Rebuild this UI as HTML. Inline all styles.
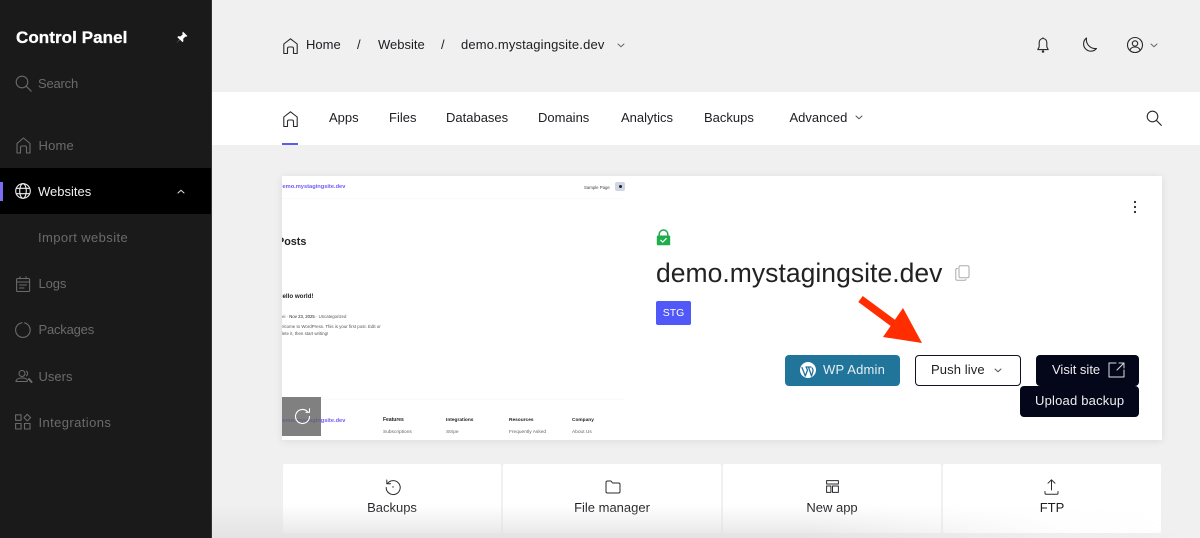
<!DOCTYPE html>
<html><head><meta charset="utf-8"><style>
html,body{margin:0;padding:0;width:1200px;height:538px;overflow:hidden;background:#f0f0f0;font-family:"Liberation Sans","DejaVu Sans",sans-serif;color:#1d1d22}
.t{position:absolute;white-space:nowrap;font-size:13px;line-height:18px}
.b{position:absolute}
.c{text-align:center}
svg{position:absolute;overflow:visible;fill:none;stroke-linecap:round;stroke-linejoin:round}
.g{color:#6b6b6b}
.sv{stroke:#6a6a6a;stroke-width:1.1}
.dk{stroke:#2a2a2e;stroke-width:1.1}
.m{position:absolute;white-space:nowrap;color:#333}
</style></head><body>
<div class="b" style="left:212px;top:92px;width:988px;height:53px;background:#fff"></div>
<div class="b" style="left:0;top:0;width:211px;height:538px;background:#1a1a1a"></div>
<div class="b" style="left:211px;top:0;width:1px;height:538px;background:#333"></div>
<div class="b" style="left:0;top:168px;width:211px;height:46px;background:#000"></div>
<div class="b" style="left:0;top:182px;width:3px;height:19px;background:#7b6cf6"></div>

<div class="t" style="left:16px;top:28px;font-size:17px;font-weight:bold;color:#fff;line-height:20px;letter-spacing:.07px;-webkit-text-stroke:.3px #fff">Control Panel</div>
<svg style="left:175px;top:31px" width="13" height="13" viewBox="0 0 13 13"><path d="M8 .6l4.400 4.400-1 .8-1-.2-2.200 2.200.2 2.400-.9.900-2.500-2.500L1 12.400l3.700-3.900-2.400-2.400.9-.9 2.400.2L7.800 3.200l-.6-1z" fill="#fff"/></svg>
<svg class="sv" style="left:15px;top:75px" width="17" height="17" viewBox="0 0 17 17"><circle cx="7" cy="7" r="5.800"/><path d="M11.200 11.200l5 5"/></svg>
<div class="t g" style="left:38px;top:75px;letter-spacing:-.2px">Search</div>
<svg class="sv" style="left:16px;top:137px" width="15" height="17" viewBox="0 0 15 17"><path d="M1 16V6.500L7.500 1 14 6.500V16h-3.500v-5.500a1.500 1.500 0 0 0-1.500-1.500H6a1.500 1.500 0 0 0-1.500 1.500V16z"/></svg>
<div class="t g" style="left:38.500px;top:137px;letter-spacing:.2px">Home</div>
<svg style="left:15px;top:183px;stroke:#f0f0f0;stroke-width:1.100" width="16" height="16" viewBox="0 0 16 16"><circle cx="8" cy="8" r="7.300"/><ellipse cx="8" cy="8" rx="3.300" ry="7.300"/><path d="M1.300 5.300h13.400M1.300 10.700h13.400"/></svg>
<div class="t" style="left:38px;top:183px;color:#f0f0f0">Websites</div>
<svg style="left:177px;top:189px;stroke:#ddd;stroke-width:1" width="8" height="5" viewBox="0 0 8 5"><path d="M1 4l3-2.800L7 4"/></svg>
<div class="t g" style="left:38px;top:229px;letter-spacing:.4px">Import website</div>
<svg class="sv" style="left:16px;top:276px" width="14" height="16" viewBox="0 0 14 16"><rect x=".6" y="2.500" width="13" height="13" rx="1"/><path d="M.6 6h13M4 .8v2M10 .8v2M3.500 9h7M3.500 12h4.500"/></svg>
<div class="t g" style="left:38.500px;top:275px;letter-spacing:-.1px">Logs</div>
<svg class="sv" style="left:15px;top:322px" width="16" height="16" viewBox="0 0 16 16"><path d="M7 .8A7.300 7.300 0 1 0 15.200 8 7.300 7.300 0 0 0 9.500.9"/></svg>
<div class="t g" style="left:38.500px;top:321px;letter-spacing:-.2px">Packages</div>
<svg class="sv" style="left:15px;top:370px" width="17" height="13" viewBox="0 0 17 13"><circle cx="7" cy="3.500" r="3"/><path d="M1 11.500c0-2.500 3-3.500 6-3.500s5 .8 5.500 2.500c0 .8-.5 1-1 1H2c-.6 0-1 0-1-.5zM11.500 1.200c1.500 1 1.500 3.600 0 4.600"/><path d="M14 9l2.500 3" stroke-width="2"/></svg>
<div class="t g" style="left:38.500px;top:368px">Users</div>
<svg class="sv" style="left:15px;top:414px" width="16" height="16" viewBox="0 0 16 16"><rect x=".6" y=".8" width="5.500" height="5.500"/><rect x=".6" y="9.500" width="5.500" height="5.500"/><rect x="9.500" y="9.500" width="5.500" height="5.500"/><path d="M12.300.3l3.300 3.300-3.300 3.300L9 3.600z"/></svg>
<div class="t g" style="left:38.500px;top:414px;letter-spacing:.4px">Integrations</div>

<svg class="dk" style="left:283px;top:38px" width="15" height="16" viewBox="0 0 15 16"><path d="M.8 15.500V6L7.500.8 14.200 6v9.500h-3.700v-5a1.500 1.500 0 0 0-1.500-1.500H6a1.500 1.500 0 0 0-1.500 1.500v5z"/></svg>
<div class="t" style="left:306px;top:36px">Home</div>
<div class="t" style="left:357px;top:36px">/</div>
<div class="t" style="left:378px;top:36px">Website</div>
<div class="t" style="left:441px;top:36px">/</div>
<div class="t" style="left:461px;top:36px;letter-spacing:.15px">demo.mystagingsite.dev</div>
<svg style="left:617px;top:43px;stroke:#666;stroke-width:1" width="8" height="5" viewBox="0 0 8 5"><path d="M1 1l3 2.800L7 1"/></svg>
<svg class="dk" style="left:1037px;top:37px" width="12" height="16" viewBox="0 0 12 16"><path d="M6 1.500a3.800 3.800 0 0 0-3.800 3.800v4.500L.8 12.600h10.400L9.800 9.800V5.300A3.800 3.800 0 0 0 6 1.500zM6 .8v.7"/><circle cx="6" cy="14.500" r=".7" fill="#2a2a2e"/></svg>
<svg class="dk" style="left:1081px;top:37px" width="16" height="16" viewBox="0 0 16 16"><path d="M5.500 1A7.300 7.300 0 1 0 15.500 11.500 9 9 0 0 1 5.500 1z"/></svg>
<svg class="dk" style="left:1127px;top:37px" width="16" height="16" viewBox="0 0 16 16"><circle cx="8" cy="8" r="7.500"/><circle cx="8" cy="6.500" r="2.700"/><path d="M3 13c.8-2.200 2.700-3 5-3s4.200.8 5 3"/></svg>
<svg style="left:1150px;top:43px;stroke:#666;stroke-width:1" width="8" height="5" viewBox="0 0 8 5"><path d="M1 1l3 2.800L7 1"/></svg>

<svg class="dk" style="left:283px;top:111px" width="15" height="16" viewBox="0 0 15 16"><path d="M.8 15.500V6L7.500.8 14.200 6v9.500h-3.700v-5a1.500 1.500 0 0 0-1.500-1.500H6a1.500 1.500 0 0 0-1.500 1.500v5z"/></svg>
<div class="b" style="left:282px;top:143px;width:16px;height:2px;background:#5b5bf0"></div>
<div class="t" style="left:329px;top:109px">Apps</div>
<div class="t" style="left:389px;top:109px">Files</div>
<div class="t" style="left:446px;top:109px">Databases</div>
<div class="t" style="left:538px;top:109px">Domains</div>
<div class="t" style="left:621px;top:109px">Analytics</div>
<div class="t" style="left:704px;top:109px">Backups</div>
<div class="t" style="left:789.500px;top:109px">Advanced</div>
<svg style="left:855px;top:115px;stroke:#555;stroke-width:1" width="8" height="5" viewBox="0 0 8 5"><path d="M1 1l3 2.800L7 1"/></svg>
<svg class="dk" style="left:1146px;top:110px" width="16" height="16" viewBox="0 0 16 16"><circle cx="6.500" cy="6.500" r="5.300"/><path d="M10.300 10.300l5 5"/></svg>

<div class="b" style="left:282px;top:176px;width:880px;height:264px;background:#fff;box-shadow:0 1px 8px rgba(0,0,0,.09);overflow:hidden">
  <div class="b" style="left:0;top:0;width:343px;height:264px;overflow:hidden;filter:blur(.35px)">
    <div class="m" style="left:-3px;top:6.500px;font-size:5.700px;line-height:9px;font-weight:bold;color:#6f5cf5">demo.mystagingsite.dev</div>
    <div class="m" style="left:302px;top:7.500px;font-size:4.300px;line-height:7px;color:#444">Sample Page</div>
    <div class="b" style="left:333px;top:6px;width:10px;height:9px;border-radius:2px;background:#cfd6e6"></div>
    <div class="b" style="left:337px;top:9px;width:3px;height:3px;border-radius:50%;background:#222"></div>
    <div class="b" style="left:0;top:22px;width:343px;height:1px;background:#fafafa"></div>
    <div class="m" style="left:-5px;top:60px;font-size:10.800px;line-height:13px;font-weight:bold;color:#222">Posts</div>
    <div class="m" style="left:-4px;top:116px;font-size:6.200px;line-height:9px;font-weight:bold;color:#222">Hello world!</div>
    <div class="m" style="left:-9px;top:136.500px;font-size:4.300px;line-height:7px;color:#555">Andrei · <span style="color:#222">Nov 23, 2025</span> · Uncategorized</div>
    <div class="m" style="left:-5px;top:147px;font-size:4.400px;line-height:7px;color:#555">Welcome to WordPress. This is your first post. Edit or</div>
    <div class="m" style="left:-5px;top:154px;font-size:4.400px;line-height:7px;color:#555">delete it, then start writing!</div>
    <div class="b" style="left:0;top:223px;width:343px;height:1px;background:#fafafa"></div>
    <div class="m" style="left:-3px;top:240.500px;font-size:5.700px;line-height:9px;font-weight:bold;color:#6f5cf5">demo.mystagingsite.dev</div>
    <div class="m" style="left:101px;top:241px;font-size:5px;line-height:7px;font-weight:bold;color:#222">Features</div>
    <div class="m" style="left:164px;top:241px;font-size:4.800px;line-height:7px;font-weight:bold;color:#222">Integrations</div>
    <div class="m" style="left:227px;top:241px;font-size:4.800px;line-height:7px;font-weight:bold;color:#222">Resources</div>
    <div class="m" style="left:290px;top:241px;font-size:4.800px;line-height:7px;font-weight:bold;color:#222">Company</div>
    <div class="m" style="left:101px;top:253px;font-size:4.800px;line-height:7px;color:#666">Subscriptions</div>
    <div class="m" style="left:164px;top:253px;font-size:4.800px;line-height:7px;color:#666">Stripe</div>
    <div class="m" style="left:227px;top:253px;font-size:4.800px;line-height:7px;color:#666">Frequently Asked</div>
    <div class="m" style="left:290px;top:253px;font-size:4.800px;line-height:7px;color:#666">About Us</div>
  </div>
  <div class="b" style="left:0;top:221px;width:39px;height:39px;background:rgba(100,100,100,.82)"></div>
  <svg style="left:12px;top:232px;stroke:#fff;stroke-width:1.100" width="17" height="17" viewBox="0 0 17 17"><path d="M15.500 8.500a7 7 0 1 1-2.200-5.100M15.500 .8v3.500H12"/></svg>
</div>

<svg style="left:1131px;top:200px" width="8" height="14" viewBox="0 0 8 14"><circle cx="4" cy="2" r="1.100" fill="#222"/><circle cx="4" cy="7" r="1.100" fill="#222"/><circle cx="4" cy="12" r="1.100" fill="#222"/></svg>
<svg style="left:656px;top:229px" width="15" height="17" viewBox="0 0 15 17"><path d="M3.200 7V5.300a4.300 4.300 0 0 1 8.600 0V7" stroke="#22a84a" stroke-width="1.500"/><rect x=".8" y="6.500" width="13.400" height="9.700" rx="1" fill="#1fae4b"/><path d="M4.800 11.300l2 1.800 3.400-3.500" stroke="#fff" stroke-width="1.200"/></svg>
<div class="t" style="left:656px;top:256px;font-size:26.500px;line-height:34px;color:#222;letter-spacing:.03px">demo.mystagingsite.dev</div>
<svg style="left:955px;top:265px;stroke:#aaa;stroke-width:1" width="15" height="16" viewBox="0 0 15 16"><rect x="4" y=".8" width="10" height="12" rx="1.500"/><path d="M2.500 3.500H2A1.200 1.200 0 0 0 .8 4.700v9.300A1.200 1.200 0 0 0 2 15.200h8a1.200 1.200 0 0 0 1-1"/></svg>
<div class="b c" style="left:656px;top:301px;width:35px;height:24px;border-radius:2px;background:#5058f8;color:#fff;font-size:10.500px;line-height:24px">STG</div>

<svg style="left:0;top:0" width="1200" height="538" viewBox="0 0 1200 538"><path d="M860.500 299L893 323" stroke="#ff2d00" stroke-width="7.500" stroke-linecap="butt"/><path d="M903 308L922 343 883 337z" fill="#ff2d00"/></svg>

<div class="b" style="left:785px;top:355px;width:115px;height:31px;border-radius:4px;background:#21759b"></div>
<svg style="left:800px;top:362px" width="16" height="16" viewBox="0 0 16 16"><circle cx="8" cy="8" r="8" fill="#fff"/><path d="M2 5.500l3.300 8.500L7.500 8l-1.500-3M6 5h5M8.500 5l3 9 1.500-5c.3-1.300-.3-2-.8-3" stroke="#21759b" stroke-width="1.300"/></svg>
<div class="t" style="left:823px;top:361px;color:#e8eff3;letter-spacing:.2px">WP Admin</div>
<div class="b" style="left:915px;top:355px;width:104px;height:29px;border:1px solid #10121f;border-radius:4px;background:#fff"></div>
<div class="t" style="left:931px;top:361px;letter-spacing:.1px">Push live</div>
<svg style="left:994px;top:368px;stroke:#555;stroke-width:1" width="8" height="5" viewBox="0 0 8 5"><path d="M1 1l3 2.800L7 1"/></svg>
<div class="b" style="left:1036px;top:355px;width:103px;height:31px;border-radius:4px;background:#04071a"></div>
<div class="t" style="left:1052px;top:361px;color:#eee">Visit site</div>
<svg style="left:1108px;top:362px;stroke:#ddd;stroke-width:1" width="17" height="16" viewBox="0 0 17 16"><path d="M8 1H1v14h15V8M9 8l7-7M11 1h5v5"/></svg>
<div class="b" style="left:1020px;top:386px;width:119px;height:31px;border-radius:4px;background:#04071a"></div>
<div class="t" style="left:1035px;top:392px;color:#eee;letter-spacing:.2px">Upload backup</div>

<div class="b" style="left:283px;top:464px;width:218px;height:69px;background:#fff;border-radius:2px"></div>
<div class="b" style="left:503px;top:464px;width:218px;height:69px;background:#fff;border-radius:2px"></div>
<div class="b" style="left:723px;top:464px;width:218px;height:69px;background:#fff;border-radius:2px"></div>
<div class="b" style="left:943px;top:464px;width:218px;height:69px;background:#fff;border-radius:2px"></div>
<svg class="dk" style="left:385px;top:479px" width="16" height="16" viewBox="0 0 16 16"><path d="M2.500 4.500A7 7 0 1 1 1.200 8.500M1.800 1v3.800h3.800" stroke-width="1"/><circle cx="8" cy="8" r=".7" fill="#333" stroke="none"/></svg>
<svg class="dk" style="left:605px;top:480px" width="16" height="14" viewBox="0 0 16 14"><path d="M1 2.500A1.500 1.500 0 0 1 2.500 1H6l1.500 2h6A1.500 1.500 0 0 1 15 4.500v7a1.500 1.500 0 0 1-1.500 1.500h-11A1.500 1.500 0 0 1 1 11.500z" stroke-width="1"/></svg>
<svg class="dk" style="left:826px;top:480px" width="13" height="13" viewBox="0 0 13 13"><rect x=".6" y=".6" width="11.800" height="3.400" stroke-width="1"/><rect x=".6" y="6" width="4.300" height="6.400" stroke-width="1"/><rect x="6.500" y="6" width="5.900" height="6.400" stroke-width="1"/></svg>
<svg class="dk" style="left:1044px;top:479px" width="15" height="16" viewBox="0 0 15 16"><path d="M7.500 11V1M4 4.200L7.500 .8 11 4.200M1 12.500v1.700c0 .6.400 1 1 1h11c.6 0 1-.4 1-1v-1.700" stroke-width="1"/></svg>
<div class="t c" style="left:283px;top:499px;width:218px">Backups</div>
<div class="t c" style="left:503px;top:499px;width:218px">File manager</div>
<div class="t c" style="left:723px;top:499px;width:218px">New app</div>
<div class="t c" style="left:943px;top:499px;width:218px">FTP</div>
<div class="b" style="left:212px;top:505px;width:988px;height:33px;background:linear-gradient(to bottom,rgba(225,225,225,0),rgba(225,225,225,.85));-webkit-mask-image:linear-gradient(to right,#000 0,#000 60%,rgba(0,0,0,.1) 85%,rgba(0,0,0,0) 100%);mask-image:linear-gradient(to right,#000 0,#000 60%,rgba(0,0,0,.1) 85%,rgba(0,0,0,0) 100%)"></div>
</body></html>
